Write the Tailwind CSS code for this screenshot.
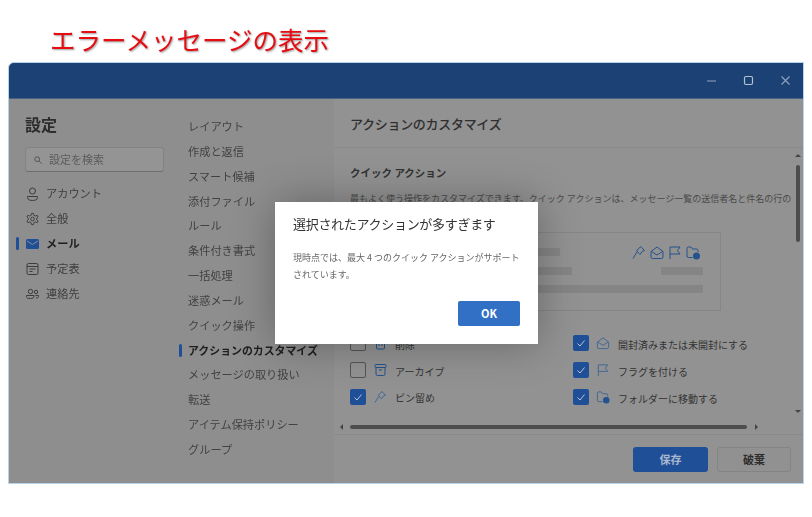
<!DOCTYPE html>
<html lang="ja">
<head>
    <meta charset="UTF-8">
    <title>エラーメッセージの表示</title>
    <script src="https://cdn.jsdelivr.net/npm/@tailwindcss/browser@4"></script>
</head>
<body class="bg-white w-[812px] h-[517px] overflow-hidden blur-[0.35px] font-['Noto_Sans_CJK_JP','Noto_Sans',sans-serif]">
    <!-- page title -->
    <div class="h-[62px] pl-[50px] pt-[21px] text-[25.5px] leading-9 text-[#e60d12] [text-shadow:1px_1px_2px_#999]">エラーメッセージの表示</div>

    <!-- dimmed window -->
    <div class="relative ml-2 w-[796px] h-[422px] border border-[#b5d3ea] bg-[#8e8e8e] rounded-tl-md overflow-hidden flex flex-col">
        <!-- title bar -->
        <div class="h-9 bg-[#1c4174] flex items-center justify-end shrink-0 border-b border-[#4a6283]">
            <svg class="w-[12px] h-[12px] mr-[25px]" viewBox="0 0 12 12" fill="none" stroke="#8fa3bf" stroke-width="1.2"><path d="M1 6h9"/></svg>
            <svg class="w-[12px] h-[12px] mr-[25px]" viewBox="0 0 12 12" fill="none" stroke="#b4c1d3" stroke-width="1.2"><rect x="1.5" y="1.5" width="8" height="8" rx="1.5"/></svg>
            <svg class="w-[12px] h-[12px] mr-[11px]" viewBox="0 0 12 12" fill="none" stroke="#8fa3bf" stroke-width="1.1"><path d="M1.5 1.5l8 8M9.500 1.500l-8 8"/></svg>
        </div>

        <div class="flex flex-1 min-h-0">
            <!-- left nav -->
            <div class="w-[163px] shrink-0 pl-4 pt-[13px] text-[#3e3e3e]">
                <div class="text-[16px] leading-6 font-bold text-[#2c2c2c]">設定</div>
                <div class="mt-[11px] w-[139px] h-[25px] flex items-center pl-2 gap-[7px] rounded-[3px] bg-[#949494] border border-[#838383] border-b-[#6f6f6f] text-[11px] text-[#5c5c5c]">
                    <svg class="w-2 h-2" viewBox="0 0 10 10" fill="none" stroke="#555" stroke-width="1.2"><circle cx="4" cy="4" r="3"/><path d="M6.300 6.300L9.500 9.500"/></svg>
                    設定を検索
                </div>
                <div class="mt-[9px] flex flex-col text-[11.2px]">
                    <div class="h-[25px] flex items-center gap-[7px] pl-px">
                        <svg class="w-[13px] h-[14px]" viewBox="0 0 13 14" fill="none" stroke="#3c3c3c"><circle cx="6.500" cy="4" r="3"/><path d="M1.500 9.500h10v1c0 2-2 3-5 3s-5-1-5-3z"/></svg>
                        <span>アカウント</span>
                    </div>
                    <div class="h-[25px] flex items-center gap-[7px] pl-px">
                        <svg class="w-[13px] h-[14px]" viewBox="0 0 14 14" fill="none" stroke="#3c3c3c"><circle cx="7" cy="7" r="2"/><path d="M6 1h2l.5 2 1.700.8 1.800-.8 1 1.800-1.400 1.300v1.800l1.400 1.300-1 1.800-1.800-.8-1.700.8-.5 2H6l-.5-2-1.700-.8-1.800.8-1-1.800 1.400-1.300V6.100L1 4.800l1-1.800 1.800.8L5.500 3z"/></svg>
                        <span>全般</span>
                    </div>
                    <div class="relative h-[25px] flex items-center gap-[7px] pl-px font-bold text-[#1f1f1f]">
                        <span class="absolute left-[-9px] top-[6px] w-[3px] h-[13px] rounded-sm bg-[#1f4f96]"></span>
                        <svg class="w-[13px] h-[14px]" viewBox="0 0 13 14"><rect y="2" width="13" height="10" rx="1.500" fill="#1f4f96"/><path d="M1 4l5.500 3.500L12 4" fill="none" stroke="#8e8e8e"/></svg>
                        <span>メール</span>
                    </div>
                    <div class="h-[25px] flex items-center gap-[7px] pl-px">
                        <svg class="w-[13px] h-[14px]" viewBox="0 0 13 14" fill="none" stroke="#3c3c3c"><rect x="1" y="1.500" width="11" height="11" rx="1.500"/><path d="M1 4.500h11M3.500 7h6M3.500 9.500h3"/></svg>
                        <span>予定表</span>
                    </div>
                    <div class="h-[25px] flex items-center gap-[7px] pl-px">
                        <svg class="w-[13px] h-[14px]" viewBox="0 0 13 14" fill="none" stroke="#3c3c3c"><circle cx="4.500" cy="4.500" r="2.200"/><circle cx="10" cy="5" r="1.700"/><path d="M.5 8.500h7.500v1c0 1.500-1.500 2-3.700 2S.5 11 .5 9.500zM9.500 8.500h3v1c0 1-1 1.500-2.500 1.500"/></svg>
                        <span>連絡先</span>
                    </div>
                </div>
            </div>

            <!-- sub nav -->
            <div class="w-[162px] shrink-0 pl-4 pt-[15px] text-[11.2px] text-[#424242]">
                <div class="h-[24.85px] flex items-center">レイアウト</div>
                <div class="h-[24.85px] flex items-center">作成と返信</div>
                <div class="h-[24.85px] flex items-center">スマート候補</div>
                <div class="h-[24.85px] flex items-center">添付ファイル</div>
                <div class="h-[24.85px] flex items-center">ルール</div>
                <div class="h-[24.85px] flex items-center">条件付き書式</div>
                <div class="h-[24.85px] flex items-center">一括処理</div>
                <div class="h-[24.85px] flex items-center">迷惑メール</div>
                <div class="h-[24.85px] flex items-center">クイック操作</div>
                <div class="relative h-[24.85px] flex items-center font-bold text-[10.9px] text-[#1f1f1f] whitespace-nowrap">
                    <span class="absolute left-[-9px] top-[6px] w-[3px] h-[13px] rounded-sm bg-[#1f4f96]"></span>
                    アクションのカスタマイズ
                </div>
                <div class="h-[24.85px] flex items-center">メッセージの取り扱い</div>
                <div class="h-[24.85px] flex items-center">転送</div>
                <div class="h-[24.85px] flex items-center">アイテム保持ポリシー</div>
                <div class="h-[24.85px] flex items-center">グループ</div>
            </div>

            <!-- right pane -->
            <div class="relative flex-1 min-w-0 bg-[#929292] flex flex-col">
                <div class="h-[49px] shrink-0 pl-4 pt-[13px] text-[13px] tracking-[-0.3px] leading-6 font-medium text-[#2f2f2f] border-b border-[#8a8a8a]">アクションのカスタマイズ</div>
                <div class="flex-1 min-h-0 pl-4 pt-[15px] overflow-hidden">
                    <div class="text-[10.5px] leading-5 font-bold text-[#333]">クイック アクション</div>
                    <div class="mt-[8px] w-[434px] text-[9px] leading-4 text-[#4a4a4a] whitespace-nowrap">最もよく使う操作をカスタマイズできます。クイック アクションは、メッセージ一覧の送信者名と件名の行の</div>

                    <!-- preview card -->
                    <div class="mt-[25px] w-[371px] h-[79px] border border-[#868686] pt-[11px] px-[17px] flex flex-col gap-[7px]">
                        <div class="flex items-center justify-between h-[16px]">
                            <div class="w-[192px] h-[8px] bg-[#858585]"></div>
                            <div class="flex gap-[4px] mr-[3px]">
                                <svg class="w-[14px] h-[15px]" viewBox="0 0 14 15" fill="none" stroke="#23528f"><path d="M8.500 1.500l4 4-2.500 1-2 3-1-1L4.500 5.500l2.500-2zM5 7L1 13.500"/></svg>
                                <svg class="w-[14px] h-[15px]" viewBox="0 0 14 15" fill="none" stroke="#23528f"><path d="M1 6.500L7 2l6 4.500V12a1.500 1.500 0 0 1-1.500 1.500h-9A1.500 1.500 0 0 1 1 12zM1.500 6.500L7 10l5.500-3.500"/></svg>
                                <svg class="w-[14px] h-[15px]" viewBox="0 0 14 15" fill="none" stroke="#23528f"><path d="M2 14V2h10l-2.500 3.500L12 9H2"/></svg>
                                <svg class="w-[14px] h-[15px]" viewBox="0 0 14 15" fill="none" stroke="#23528f"><path d="M6.500 12.500H2.500a1.500 1.500 0 0 1-1.500-1.500V3.500A1.500 1.500 0 0 1 2.500 2h2.500L6.500 4h4A1.500 1.500 0 0 1 12 5.500V7"/><circle cx="10.500" cy="11" r="3.500" fill="#23528f" stroke="none"/></svg>
                            </div>
                        </div>
                        <div class="flex justify-between">
                            <div class="w-[204px] h-[8px] bg-[#858585]"></div>
                            <div class="w-[42px] h-[8px] bg-[#858585]"></div>
                        </div>
                        <div class="mt-[3px] h-[8px] bg-[#858585]"></div>
                    </div>

                    <!-- action checkboxes -->
                    <div class="mt-[23px] grid grid-cols-[223px_1fr] gap-y-[10px] text-[10px] text-[#333]">
                        <div class="flex items-center h-[17px]">
                            <span class="w-[16px] h-[16px] rounded-[2px] border border-[#555]"></span>
                            <svg class="ml-[8px] w-[13px] h-[14px]" viewBox="0 0 13 14" fill="none" stroke="#23528f"><path d="M1 3h11M4.500 3V1.500h4V3M2.500 3v9a1 1 0 0 0 1 1h6a1 1 0 0 0 1-1V3M5 6v4M8 6v4"/></svg>
                            <span class="ml-[8px] pt-[3px]">削除</span>
                        </div>
                        <div class="flex items-center h-[17px]">
                            <span class="flex items-center justify-center w-[16px] h-[16px] rounded-[2px] bg-[#1f4f96]"><svg class="w-[10px] h-[10px]" viewBox="0 0 10 10" fill="none" stroke="#b5c4da"><path d="M1.500 5.500L4 8l4.500-5.500"/></svg></span>
                            <svg class="ml-[7px] w-[14px] h-[14px]" viewBox="0 0 14 15" fill="none" stroke="#3e6596"><path d="M1 6.500L7 2l6 4.500V12a1.500 1.500 0 0 1-1.500 1.500h-9A1.500 1.500 0 0 1 1 12zM1.500 6.500L7 10l5.500-3.500"/></svg>
                            <span class="ml-[8px] pt-[3px]">開封済みまたは未開封にする</span>
                        </div>
                        <div class="flex items-center h-[17px]">
                            <span class="w-[16px] h-[16px] rounded-[2px] border border-[#555]"></span>
                            <svg class="ml-[8px] w-[13px] h-[14px]" viewBox="0 0 13 14" fill="none" stroke="#23528f"><rect x="1" y="1.500" width="11" height="3" rx="1"/><path d="M2 4.500V11a1.500 1.500 0 0 0 1.500 1.500h6A1.500 1.500 0 0 0 11 11V4.500M5 7h3"/></svg>
                            <span class="ml-[8px] pt-[3px]">アーカイブ</span>
                        </div>
                        <div class="flex items-center h-[17px]">
                            <span class="flex items-center justify-center w-[16px] h-[16px] rounded-[2px] bg-[#1f4f96]"><svg class="w-[10px] h-[10px]" viewBox="0 0 10 10" fill="none" stroke="#b5c4da"><path d="M1.500 5.500L4 8l4.500-5.500"/></svg></span>
                            <svg class="ml-[7px] w-[14px] h-[14px]" viewBox="0 0 14 15" fill="none" stroke="#3e6596"><path d="M2 14V2h10l-2.500 3.500L12 9H2"/></svg>
                            <span class="ml-[8px] pt-[3px]">フラグを付ける</span>
                        </div>
                        <div class="flex items-center h-[17px]">
                            <span class="flex items-center justify-center w-[16px] h-[16px] rounded-[2px] bg-[#1f4f96]"><svg class="w-[10px] h-[10px]" viewBox="0 0 10 10" fill="none" stroke="#b5c4da"><path d="M1.500 5.500L4 8l4.500-5.500"/></svg></span>
                            <svg class="ml-[8px] w-[13px] h-[14px]" viewBox="0 0 14 15" fill="none" stroke="#3e6596"><path d="M8.500 1.500l4 4-2.500 1-2 3-1-1L4.500 5.500l2.500-2zM5 7L1 13.500"/></svg>
                            <span class="ml-[8px] pt-[2px]">ピン留め</span>
                        </div>
                        <div class="flex items-center h-[17px]">
                            <span class="flex items-center justify-center w-[16px] h-[16px] rounded-[2px] bg-[#1f4f96]"><svg class="w-[10px] h-[10px]" viewBox="0 0 10 10" fill="none" stroke="#b5c4da"><path d="M1.500 5.500L4 8l4.500-5.500"/></svg></span>
                            <svg class="ml-[7px] w-[14px] h-[14px]" viewBox="0 0 14 15" fill="none" stroke="#3e6596"><path d="M6.500 12.500H2.500a1.500 1.500 0 0 1-1.500-1.500V3.500A1.500 1.500 0 0 1 2.500 2h2.500L6.500 4h4A1.500 1.500 0 0 1 12 5.500V7"/><circle cx="10.500" cy="11" r="3.500" fill="#23528f" stroke="none"/></svg>
                            <span class="ml-[8px] pt-[3px]">フォルダーに移動する</span>
                        </div>
                    </div>
                </div>

                <!-- footer -->
                <div class="h-[49px] shrink-0 border-t border-[#8a8a8a] flex items-center justify-end gap-[9px] pr-[12px] text-[11px] font-bold">
                    <div class="w-[75px] h-[25px] rounded-[3px] bg-[#1f4f96] text-[#a9b8cf] flex items-center justify-center">保存</div>
                    <div class="w-[74px] h-[25px] rounded-[3px] bg-[#919191] border border-[#848484] text-[#2d2d2d] flex items-center justify-center">破棄</div>
                </div>

                <!-- scrollbars lie over the pane -->
                <div class="absolute left-[462px] top-[66px] w-[4px] h-[77px] rounded bg-[#4d4d4d]"></div>
                <div class="absolute left-[461px] top-[55px] w-0 h-0 border-x-[3px] border-x-transparent border-b-[3px] border-b-[#444]"></div>
                <div class="absolute left-[461px] top-[311px] w-0 h-0 border-x-[3px] border-x-transparent border-t-[3px] border-t-[#444]"></div>
                <div class="absolute left-[16px] top-[326px] w-[397px] h-[4px] rounded bg-[#4d4d4d]"></div>
                <div class="absolute left-[6px] top-[325px] w-0 h-0 border-y-[3px] border-y-transparent border-r-[3px] border-r-[#444]"></div>
                <div class="absolute left-[421px] top-[325px] w-0 h-0 border-y-[3px] border-y-transparent border-l-[3px] border-l-[#444]"></div>
            </div>
        </div>

        <!-- error dialog -->
        <div class="absolute left-[266px] top-[139px] w-[263px] h-[142px] bg-white shadow-[0_0_40px_rgba(0,0,0,0.3)] px-[18px] pt-[10px]">
            <div class="text-[13px] tracking-[-0.3px] leading-6 text-[#333] whitespace-nowrap">選択されたアクションが多すぎます</div>
            <div class="mt-[13px] text-[9px] leading-[17px] text-[#666] whitespace-nowrap">現時点では、最大 4 つのクイック アクションがサポート<br>されています。</div>
            <div class="absolute right-[18px] bottom-[18px] w-[62px] h-[25px] rounded-[2px] bg-[#3170c4] text-white text-[11px] font-bold flex items-center justify-center">OK</div>
        </div>
    </div>
</body>
</html>
